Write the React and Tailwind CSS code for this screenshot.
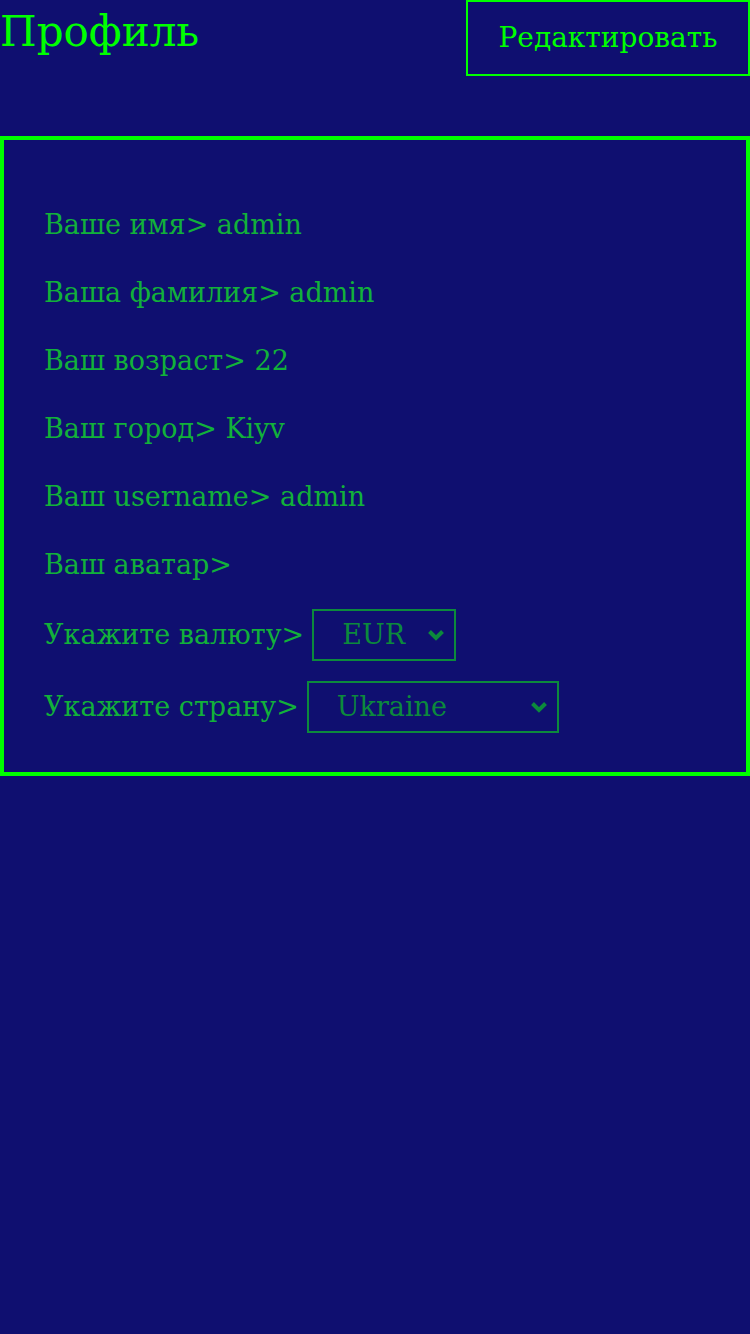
const rows = [
  ['Ваше имя', 'admin'],
  ['Ваша фамилия', 'admin'],
  ['Ваш возраст', '22'],
  ['Ваш город', 'Kiyv'],
  ['Ваш username', 'admin'],
  ['Ваш аватар', ''],
];

function Chevron() {
  return (
    <svg width="18" height="12" viewBox="0 0 18 12" className="shrink-0">
      <path d="M2.5 2.5 L9 9 L15.5 2.5" fill="none" stroke="currentColor" strokeWidth="4" />
    </svg>
  );
}

function Select({ value, width }) {
  return (
    <div
      className={`flex items-center justify-between h-[52px] border-2 border-[#0c8a3c] text-[#0c8a3c] pl-[28px] pr-[9px] ${width}`}
    >
      <span>{value}</span>
      <Chevron />
    </div>
  );
}

export default function App() {
  return (
    <div className="min-h-[1334px] w-full bg-[#0f0f70] font-['DejaVu_Serif',serif]">
      <div className="flex justify-between items-start">
        <h1 className="text-[42px] leading-[64px] text-[#00ff00]">Профиль</h1>
        <button className="w-[284px] h-[76px] border-2 border-[#00ff00] text-[28px] text-[#00ff00]">
          Редактировать
        </button>
      </div>

      <div className="mt-[60px] border-4 border-[#00ff00] px-[40px] pt-[65px] pb-[39px] text-[27px] text-[#12b13a]">
        <div className="flex flex-col gap-[28px]">
          {rows.map(([label, value]) => (
            <div key={label} className="leading-[40px]">
              {label}&gt; {value}
            </div>
          ))}
          <div className="flex items-center gap-[8px] -mt-[4px]">
            <span>Укажите валюту&gt;</span>
            <Select value="EUR" width="w-[144px]" />
          </div>
          <div className="flex items-center gap-[8px] -mt-[8px]">
            <span>Укажите страну&gt;</span>
            <Select value="Ukraine" width="w-[252px]" />
          </div>
        </div>
      </div>
    </div>
  );
}
